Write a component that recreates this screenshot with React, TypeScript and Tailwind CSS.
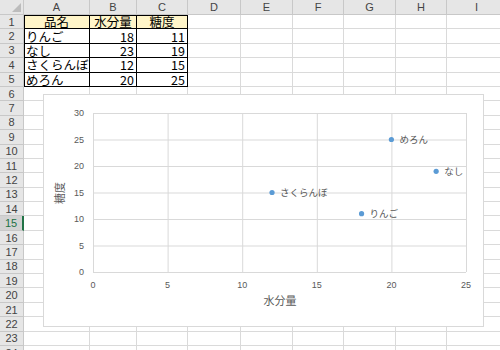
const cols = [
  { k: 'A', w: 'w-[66px]' },
  { k: 'B', w: 'w-[47px]' },
  { k: 'C', w: 'w-[51px]' },
  { k: 'D', w: 'w-[53px]' },
  { k: 'E', w: 'w-[52px]' },
  { k: 'F', w: 'w-[51px]' },
  { k: 'G', w: 'w-[52px]' },
  { k: 'H', w: 'w-[51px]' },
  { k: 'I', w: 'w-[60px]' },
];

const data = [
  { name: 'りんご', water: 18, sugar: 11 },
  { name: 'なし', water: 23, sugar: 19 },
  { name: 'さくらんぼ', water: 12, sugar: 15 },
  { name: 'めろん', water: 20, sugar: 25 },
];

const rows = Array.from({ length: 24 }, (_, i) => i + 1);

// plot box inside the chart
const PL = 50;
const PT = 19;
const PR = 423;
const PB = 178;
const sx = (v: number) => PL + ((PR - PL) * v) / 25;
const sy = (v: number) => PB - ((PB - PT) * v) / 30;

function Cell({ row, col }: { row: number; col: number }) {
  const w = cols[col].w;
  const inTable = row <= 5 && col <= 2;
  let text: string | number = '';
  let align = 'justify-start';
  if (row === 1 && col <= 2) {
    text = ['品名', '水分量', '糖度'][col];
    align = 'justify-center';
  } else if (row >= 2 && row <= 5 && col <= 2) {
    const d = data[row - 2];
    if (col === 0) text = d.name;
    else {
      text = col === 1 ? d.water : d.sugar;
      align = 'justify-end';
    }
  }
  const shadow =
    inTable && col === 0 && row === 1
      ? 'shadow-[inset_1px_1px_0_#000]'
      : inTable && col === 0
        ? 'shadow-[inset_1px_0_0_#000]'
        : inTable && row === 1
          ? 'shadow-[inset_0_1px_0_#000]'
          : '';
  return (
    <div
      className={`${w} shrink-0 h-full flex items-center ${align} px-[2px] border-r border-b whitespace-nowrap text-[12.5px] leading-[13px] text-black ${
        inTable ? 'border-black' : 'border-[#dadada]'
      } ${row === 1 && col <= 2 ? 'bg-[#fff5c9]' : 'bg-white'} ${shadow}`}
    >
      {text}
    </div>
  );
}

function Chart() {
  const ticks = [0, 5, 10, 15, 20, 25, 30];
  const xticks = [0, 5, 10, 15, 20, 25];
  return (
    <div className="absolute left-[43px] top-[94px] w-[441px] h-[233px] bg-white border border-[#d9d9d9]">
      <svg width="441" height="233" className="absolute -left-px -top-px" style={{ fontFamily: '"Noto Sans CJK JP", "Liberation Sans", sans-serif' }}>
        {ticks.map((t) => (
          <line key={'h' + t} x1={PL} x2={PR} y1={sy(t) + 0.5} y2={sy(t) + 0.5} stroke="#d9d9d9" strokeWidth="1" />
        ))}
        {xticks.map((t) => (
          <line key={'v' + t} x1={sx(t) + 0.5} x2={sx(t) + 0.5} y1={PT} y2={PB} stroke="#d9d9d9" strokeWidth="1" />
        ))}
        {ticks.map((t) => (
          <text key={'yl' + t} x={41} y={sy(t) + 3} fontSize="9" fill="#595959" textAnchor="end" fontFamily="Liberation Sans, sans-serif">
            {t}
          </text>
        ))}
        {xticks.map((t) => (
          <text key={'xl' + t} x={sx(t)} y={194} fontSize="9" fill="#595959" textAnchor="middle" fontFamily="Liberation Sans, sans-serif">
            {t}
          </text>
        ))}
        <text x={237} y={211} fontSize="11" fill="#595959" textAnchor="middle">
          水分量
        </text>
        <text x={21} y={99} fontSize="11" fill="#595959" textAnchor="middle" transform="rotate(-90 21 99)">
          糖度
        </text>
        {data.map((d) => (
          <g key={d.name}>
            <circle cx={sx(d.water)} cy={sy(d.sugar)} r="2.6" fill="#5b9bd5" />
            <text x={sx(d.water) + 8} y={sy(d.sugar) + 3.5} fontSize="9.5" fill="#595959">
              {d.name}
            </text>
          </g>
        ))}
      </svg>
    </div>
  );
}

export default function App() {
  return (
    <div
      className="relative w-[500px] h-[350px] overflow-hidden bg-white"
      style={{ fontFamily: '"Noto Sans CJK JP", "Liberation Sans", sans-serif' }}
    >
      {/* column headers */}
      <div className="flex h-[15px]">
        <div className="relative w-[24px] shrink-0 h-full bg-[#e6e6e6] border-r border-b border-[#c8c8c8]">
          <div className="absolute right-[2px] bottom-[2px] w-0 h-0 border-l-[9px] border-l-transparent border-b-[9px] border-b-[#bcbcbc]" />
        </div>
        {cols.map((c) => (
          <div
            key={c.k}
            className={`${c.w} shrink-0 h-full flex items-center justify-center bg-[#e6e6e6] border-r border-b border-[#c8c8c8] text-[11px] leading-[12px] text-[#444]`}
            style={{ fontFamily: '"Liberation Sans", sans-serif' }}
          >
            {c.k}
          </div>
        ))}
      </div>
      {rows.map((r) => (
        <div key={r} className="flex h-[14.4px]">
          <div
            className={`w-[24px] shrink-0 h-full flex items-center justify-center border-b text-[11px] leading-[12px] ${
              r === 15
                ? 'bg-[#d2d2d2] text-[#217346] border-r-2 border-r-[#217346] border-b-[#c8c8c8]'
                : 'bg-[#e6e6e6] text-[#444] border-r border-[#c8c8c8]'
            }`}
            style={{ fontFamily: '"Liberation Sans", sans-serif' }}
          >
            {r}
          </div>
          {cols.map((c, i) => (
            <Cell key={c.k} row={r} col={i} />
          ))}
        </div>
      ))}
      <Chart />
    </div>
  );
}
